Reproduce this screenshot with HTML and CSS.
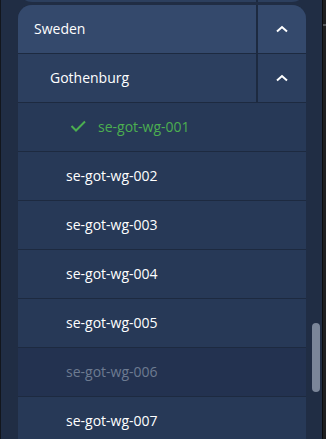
FILE: index.html
```html
<!DOCTYPE html>
<html>
<head>
<meta charset="utf-8">
<link rel="stylesheet" href="styles.css">
</head>
<body>
<div class="frame">
  <div class="main">
    <div class="list">
      <div class="card prev">
        <div class="row"><div class="label"></div><div class="toggle"></div></div>
      </div>
      <div class="card">
        <div class="row country">
          <div class="label">Sweden</div>
          <div class="toggle"><svg width="12" height="8" viewBox="0 0 12 8"><polyline points="1,6.5 6,2 11,6.5" fill="none" stroke="#fff" stroke-width="2"/></svg></div>
        </div>
        <div class="row city">
          <div class="label">Gothenburg</div>
          <div class="toggle"><svg width="12" height="8" viewBox="0 0 12 8"><polyline points="1,6.5 6,2 11,6.5" fill="none" stroke="#fff" stroke-width="2"/></svg></div>
        </div>
        <div class="item selected">
          <svg class="check" width="17" height="13" viewBox="0 0 17 13"><polyline points="1.5,6 6,10.5 15,1.5" fill="none" stroke="#4caf50" stroke-width="2"/></svg>
          <span>se-got-wg-001</span>
        </div>
        <div class="item"><span>se-got-wg-002</span></div>
        <div class="item"><span>se-got-wg-003</span></div>
        <div class="item"><span>se-got-wg-004</span></div>
        <div class="item"><span>se-got-wg-005</span></div>
        <div class="item disabled"><span>se-got-wg-006</span></div>
        <div class="item"><span>se-got-wg-007</span></div>
      </div>
    </div>
    <div class="track"><div class="thumb"></div></div>
  </div>
  <div class="edge"><div class="tick"></div></div>
</div>
</body>
</html>
```
FILE: styles.css
```css
* { box-sizing: border-box; }
html, body { margin: 0; padding: 0; }
body {
  width: 326px;
  height: 439px;
  overflow: hidden;
  background: #202d44;
  font-family: "Open Sans", "Noto Sans", sans-serif;
}
.frame {
  display: flex;
  height: 439px;
  border-left: 1px solid #12161d;
}
.main {
  display: flex;
  flex: 1;
  background: #202d44;
  overflow: hidden;
}
.list {
  width: 305px;
  padding-left: 17px;
  display: flex;
  flex-direction: column;
  gap: 3px;
}
.card {
  width: 288px;
  border-radius: 14px 14px 0 0;
  overflow: hidden;
  background: #273957;
  flex-shrink: 0;
}
.card.prev {
  margin-top: -14px;
  height: 16px;
  border-radius: 0 0 14px 14px;
  background: #2c3f5e;
}
.card.prev .row { height: 16px; border: none; }
.row {
  display: flex;
  height: 49px;
  border-bottom: 1px solid #1d2a40;
}
.row .label {
  flex: 1;
  display: flex;
  align-items: center;
  padding-bottom: 1px;
  color: #ffffff;
  font-size: 14px;
  font-weight: 500;
}
.toggle {
  width: 50px;
  border-left: 2px solid #1d2a40;
  display: flex;
  align-items: center;
  justify-content: center;
}
.country { background: #34496c; }
.country .label { padding-left: 16px; }
.city { background: #2c3f5f; }
.city .label { padding-left: 32px; }
.item {
  height: 49px;
  border-bottom: 1px solid #1d2a40;
  display: flex;
  align-items: center;
  padding-left: 48px;
  padding-bottom: 1px;
  color: #ffffff;
  font-size: 14px;
  font-weight: 500;
  background: #273957;
}
.item .check { margin-left: 4px; margin-right: 11px; }
.item.selected { color: #4caf50; }
.item.disabled { background: #233250; color: #6d7b91; }
.track {
  width: 17px;
  padding: 323px 2px 0 6px;
}
.thumb {
  width: 8px;
  height: 69px;
  border-radius: 4px;
  background: #7b8699;
}
.edge {
  width: 4px;
  border-left: 1px solid #0b0c0e;
  background: #1d1e20;
  padding-top: 24px;
}
.tick {
  height: 2px;
  background: #55575b;
}
```
